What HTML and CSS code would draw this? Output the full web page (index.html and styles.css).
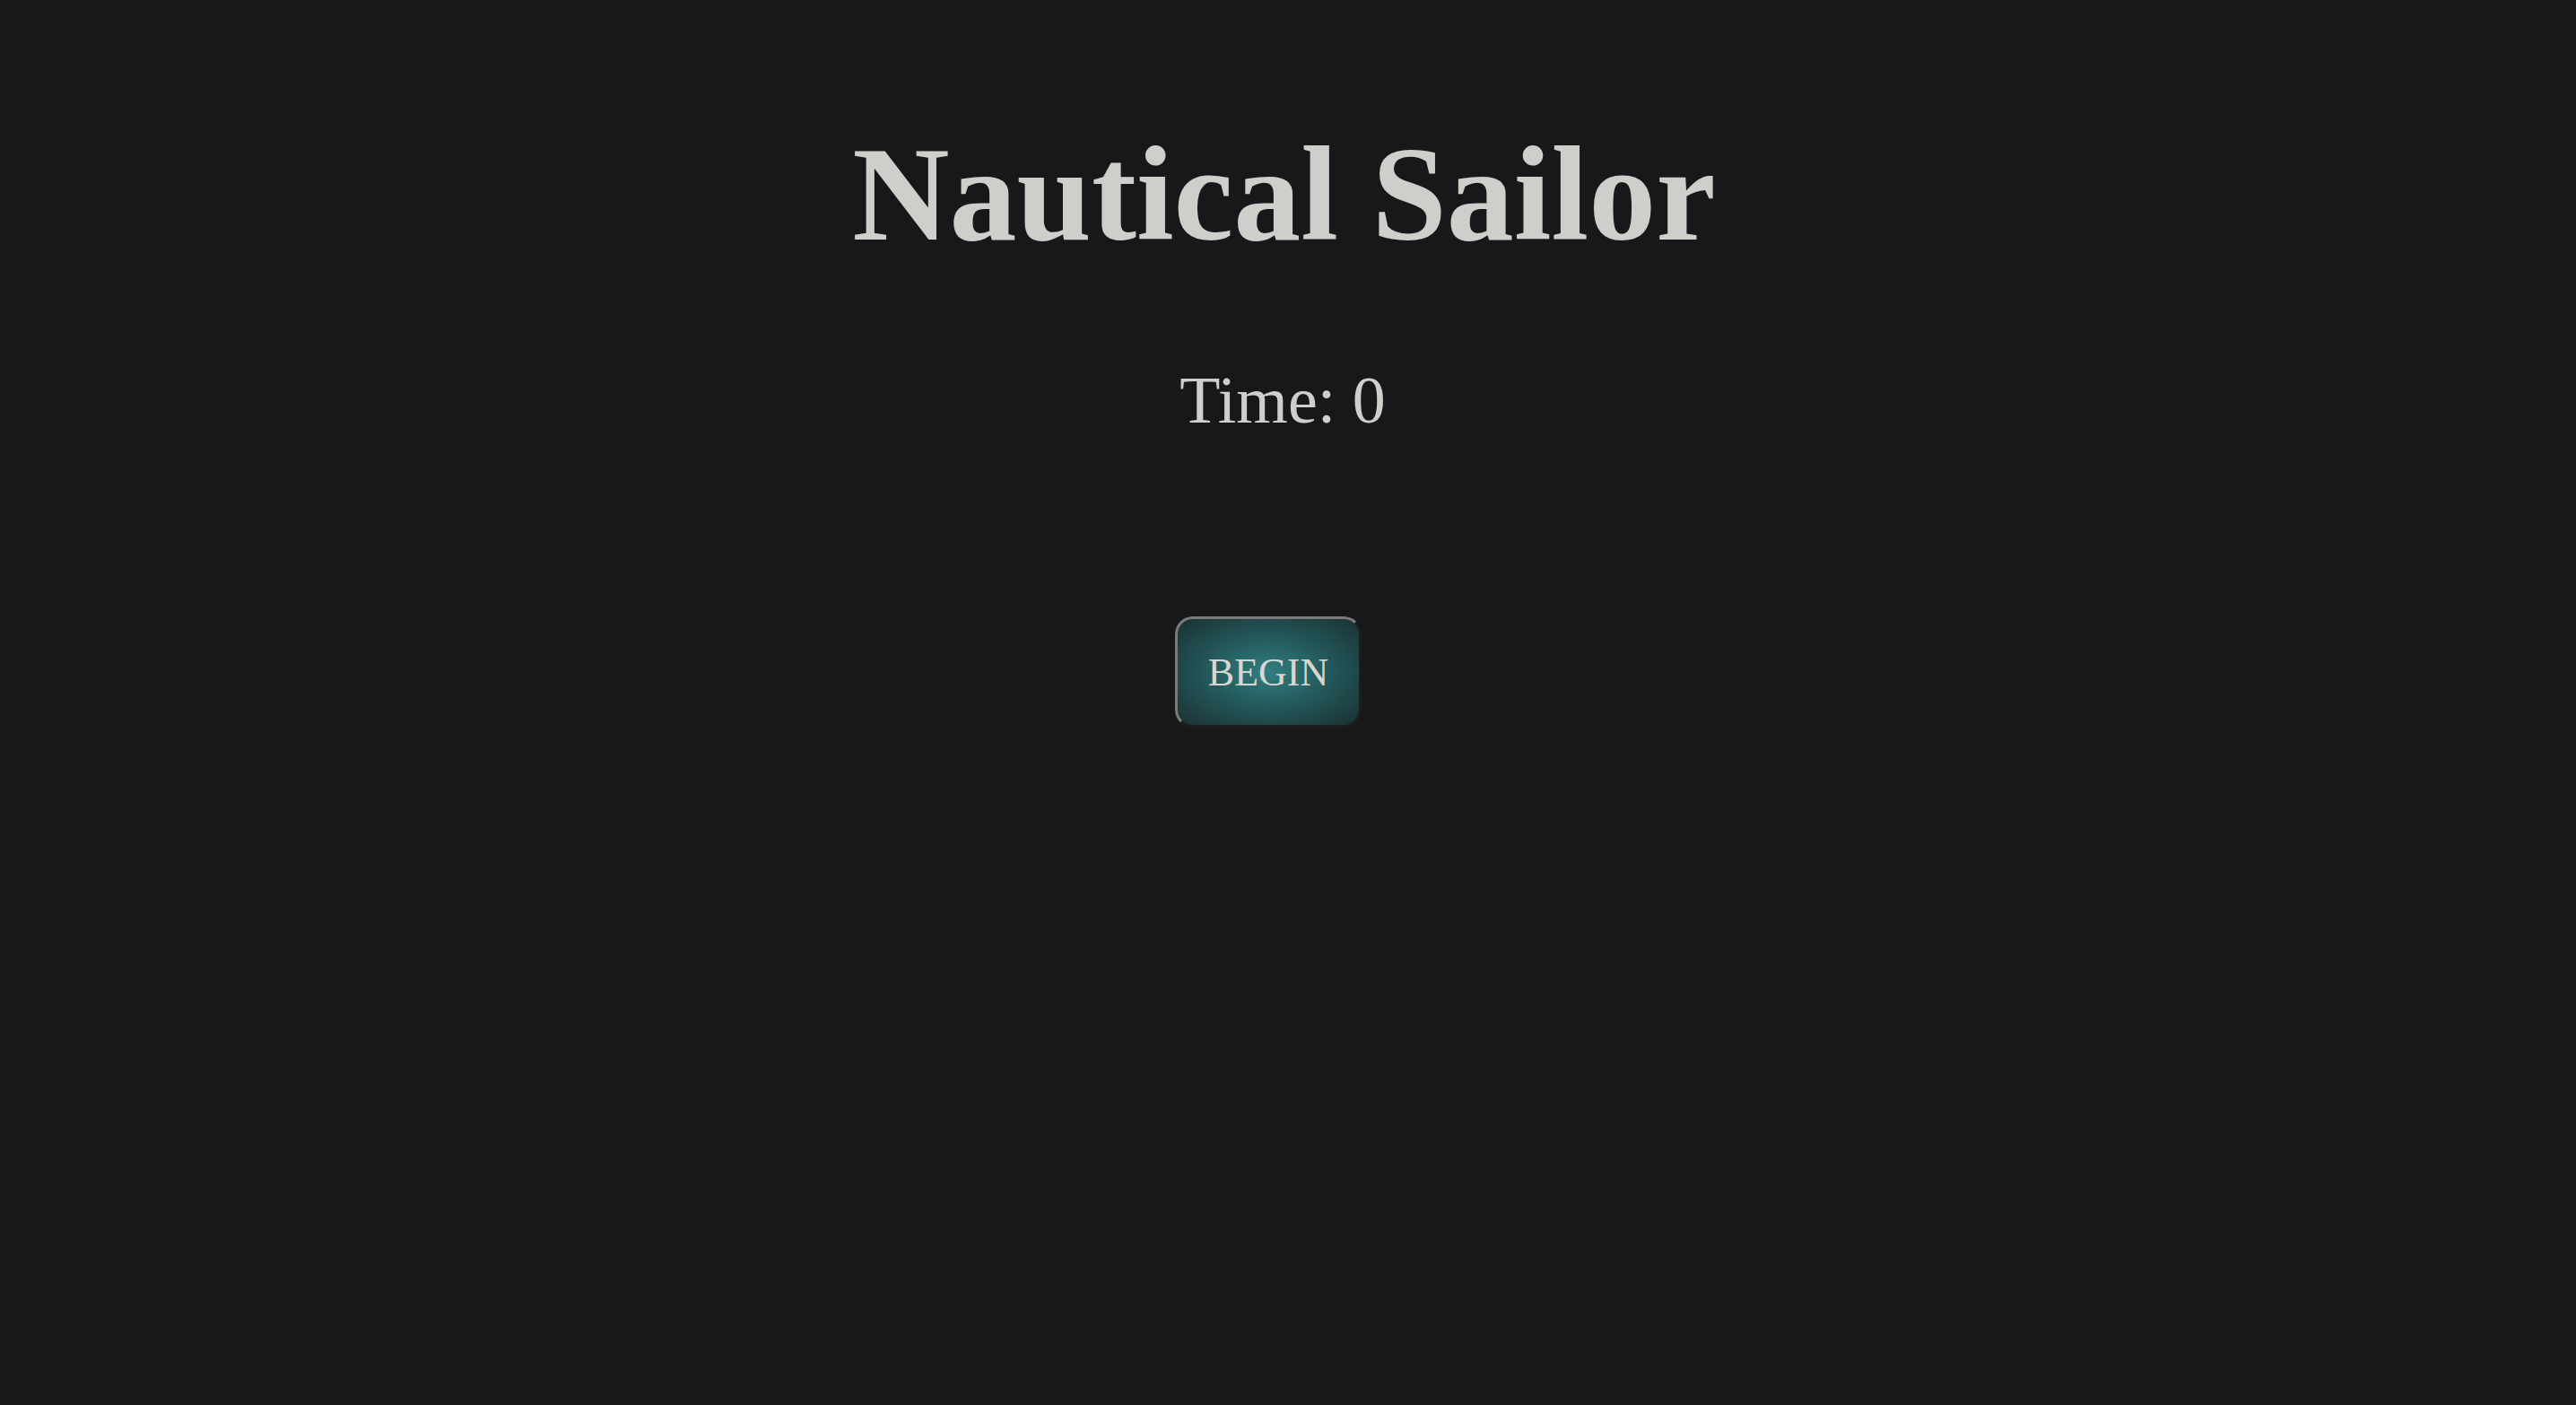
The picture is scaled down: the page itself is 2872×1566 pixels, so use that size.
FILE: index.html
```html
<!DOCTYPE html>
<html lang="en">
<head>
<meta charset="utf-8">
<title>Nautical Sailor</title>
<link rel="stylesheet" href="styles.css">
</head>
<body>
<main class="game">
  <h1 class="title">Nautical Sailor</h1>
  <p class="timer">Time: 0</p>
  <div class="controls">
    <button class="begin" type="button">BEGIN</button>
  </div>
</main>
</body>
</html>
```
FILE: styles.css
```css
html, body {
  margin: 0;
  padding: 0;
  background: #17181a;
  min-height: 100%;
}
body {
  font-family: "Liberation Serif", "Times New Roman", serif;
  color: #d0cecb;
}
.game {
  display: flex;
  flex-direction: column;
  align-items: center;
  text-align: center;
}
.title {
  margin: 141px 9px 0 0;
  font-size: 150px;
  line-height: 150px;
  font-weight: bold;
}
.timer {
  margin: 118px 12px 0 0;
  font-size: 74px;
  line-height: 74px;
}
.controls {
  margin-top: 204px;
  margin-right: 44px;
}
.begin {
  display: block;
  width: 208px;
  height: 124px;
  padding: 0;
  border-radius: 20px;
  border: 3px solid;
  border-color: #7a7a7a #1c1d1f #1c1d1f #7a7a7a;
  background: radial-gradient(ellipse at center, #327e7f 0%, #245a5c 45%, #1b3032 100%);
  color: #d8d6d2;
  font-family: "Liberation Serif", "Times New Roman", serif;
  font-size: 44px;
  cursor: pointer;
}
```
